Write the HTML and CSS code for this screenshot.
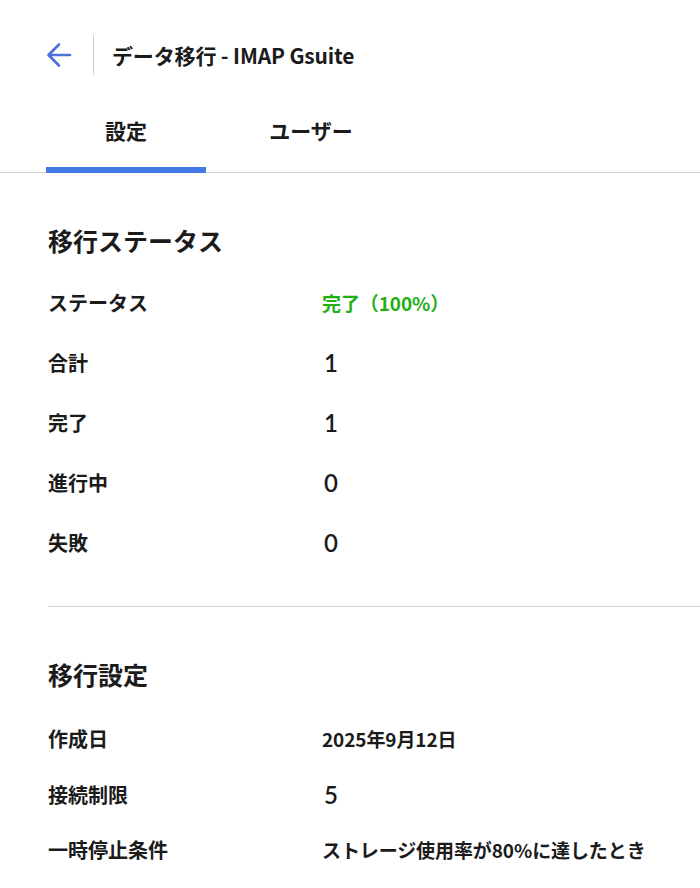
FILE: index.html
```html
<!DOCTYPE html>
<html lang="ja">
<head>
<meta charset="utf-8">
<title>データ移行 - IMAP Gsuite</title>
<link rel="stylesheet" href="styles.css">
</head>
<body>
<header class="topbar">
  <button class="back" aria-label="戻る">
    <svg width="28" height="28" viewBox="0 0 28 28"><path d="M25 14H4M14 3.5L3.5 14L14 24.5" fill="none" stroke="#4a72d9" stroke-width="2.6" stroke-linecap="round" stroke-linejoin="round"/></svg>
  </button>
  <span class="vsep"></span>
  <h1 class="title">データ移行 - IMAP Gsuite</h1>
</header>
<nav class="tabs">
  <div class="tab active">設定</div>
  <div class="tab">ユーザー</div>
</nav>
<main class="content">
  <section class="section">
    <h2 class="heading">移行ステータス</h2>
    <div class="row"><div class="label">ステータス</div><div class="value ok">完了（100%）</div></div>
    <div class="row"><div class="label">合計</div><div class="value num">1</div></div>
    <div class="row"><div class="label">完了</div><div class="value num">1</div></div>
    <div class="row"><div class="label">進行中</div><div class="value num">0</div></div>
    <div class="row"><div class="label">失敗</div><div class="value num">0</div></div>
  </section>
  <hr class="divider">
  <section class="section second">
    <h2 class="heading">移行設定</h2>
    <div class="row tight"><div class="label">作成日</div><div class="value">2025年9月12日</div></div>
    <div class="row tight"><div class="label">接続制限</div><div class="value num">5</div></div>
    <div class="row tight"><div class="label">一時停止条件</div><div class="value">ストレージ使用率が80%に達したとき</div></div>
  </section>
</main>
</body>
</html>
```
FILE: styles.css
```css
* { box-sizing: border-box; }
html, body { margin: 0; padding: 0; background: #fff; }
body {
  font-family: "Noto Sans CJK JP", "Noto Sans", sans-serif;
  color: #1b1b1b;
  width: 700px;
  overflow: hidden;
}
.topbar {
  display: flex;
  align-items: center;
  height: 110px;
  padding: 0 0 0 45px;
}
.back {
  border: 0;
  background: none;
  padding: 0;
  width: 28px;
  height: 28px;
  display: flex;
}
.vsep {
  width: 1px;
  height: 40px;
  background: #cfcfcf;
  margin-left: 20px;
}
.title {
  margin: 0 0 0 18px;
  font-size: 21px;
  font-weight: 700;
  letter-spacing: -0.15px;
}
.tabs {
  display: flex;
  gap: 25px;
  padding-left: 46px;
  border-bottom: 1px solid #d3d3d3;
  height: 63px;
}
.tab {
  width: 160px;
  text-align: center;
  font-size: 21px;
  font-weight: 700;
  padding-top: 5px;
  position: relative;
}
.tab.active::after {
  content: "";
  position: absolute;
  left: 0; right: 0; bottom: -1px;
  height: 6px;
  background: #4479e8;
}
.content { padding-left: 48px; }
.section { padding-top: 47px; }
.heading {
  margin: 0;
  font-size: 25px;
  font-weight: 700;
  line-height: 40px;
  height: 40px;
}
.section .heading { margin-bottom: 12px; }
.row {
  display: flex;
  align-items: center;
  height: 60px;
}
.row.tight { height: 55.5px; }
.label {
  width: 274px;
  font-size: 20px;
  font-weight: 700;
}
.value {
  font-size: 19px;
  font-weight: 700;
  letter-spacing: -0.1px;
}
.value.ok { color: #22b014; font-weight: 700; }
.value.num {
  font-family: Lato, "Noto Sans", sans-serif;
  font-size: 24px;
  font-weight: 600;
  padding-left: 2px;
}
.divider {
  border: 0;
  border-top: 1px solid #d3d3d3;
  margin: 34px 0 0 0;
}
.section.second { padding-top: 47px; }
.section.second .heading { margin-bottom: 17px; }
```
